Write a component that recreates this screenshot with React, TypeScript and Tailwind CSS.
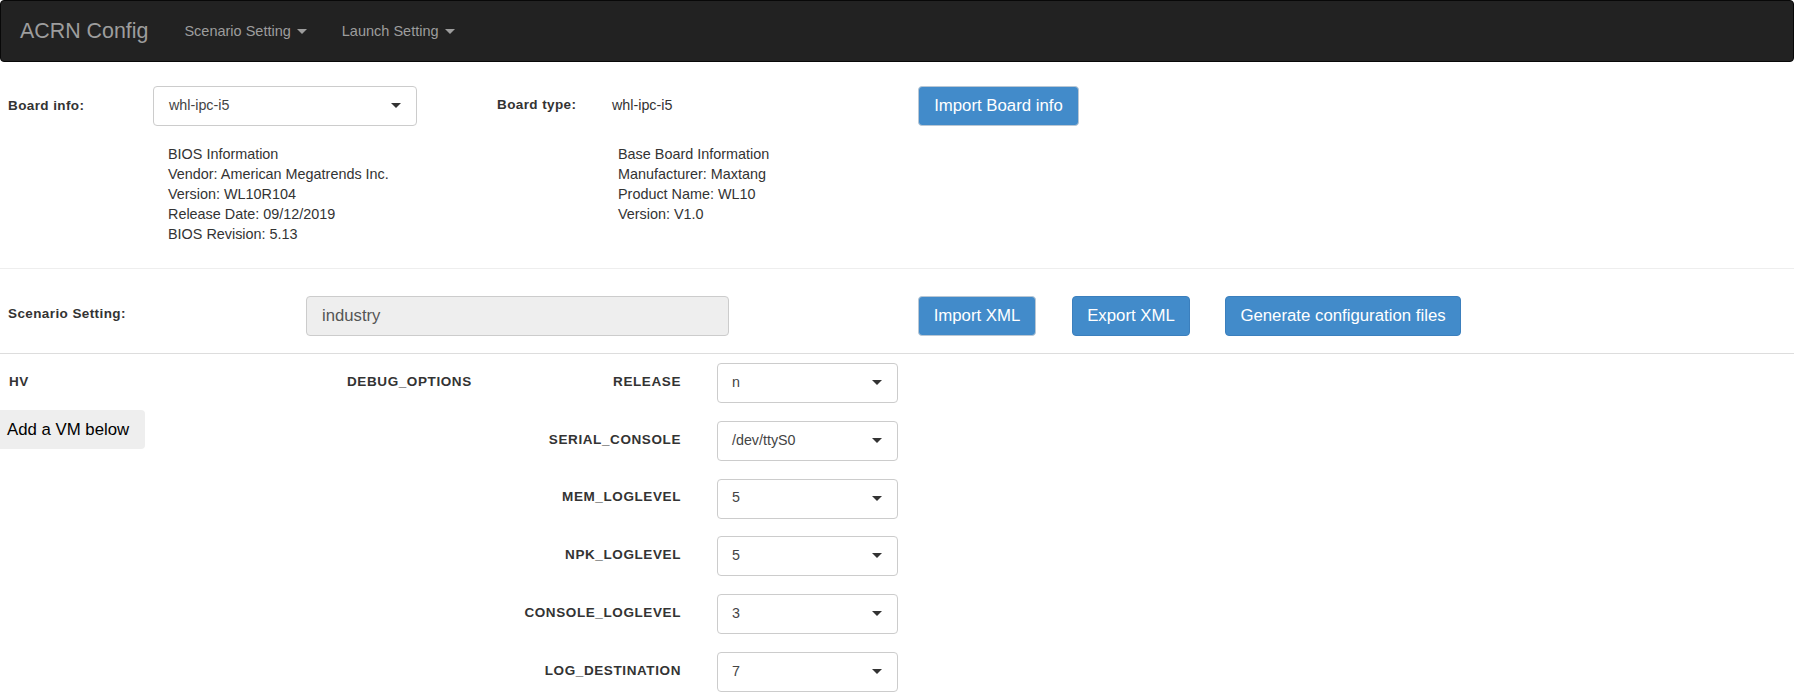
import React from 'react';

const fieldRows = [
  { name: 'RELEASE', value: 'n' },
  { name: 'SERIAL_CONSOLE', value: '/dev/ttyS0' },
  { name: 'MEM_LOGLEVEL', value: '5' },
  { name: 'NPK_LOGLEVEL', value: '5' },
  { name: 'CONSOLE_LOGLEVEL', value: '3' },
  { name: 'LOG_DESTINATION', value: '7' },
];

const biosInfo = ['BIOS Information', 'Vendor: American Megatrends Inc.', 'Version: WL10R104', 'Release Date: 09/12/2019', 'BIOS Revision: 5.13'];
const boardInfo = ['Base Board Information', 'Manufacturer: Maxtang', 'Product Name: WL10', 'Version: V1.0'];

function Caret({ className }: { className: string }) {
  return <span className={`inline-block h-0 w-0 border-x-[5px] border-t-[5px] border-x-transparent ${className}`} />;
}

function SelectBox({ value, className }: { value: string; className: string }) {
  return (
    <div className={`flex h-[40px] items-center justify-between rounded-[4px] border border-[#ccc] bg-white pb-[1px] pr-[15px] text-[14.3px] text-[#444] ${className}`}>
      <span>{value}</span>
      <Caret className="border-t-[#333]" />
    </div>
  );
}

function PrimaryButton({ label, className }: { label: string; className: string }) {
  return (
    <button type="button" className={`flex h-[40px] items-center justify-center rounded-[4px] border bg-[#428bca] text-[16.8px] text-white ${className}`}>
      {label}
    </button>
  );
}

function InfoBlock({ lines, className }: { lines: string[]; className: string }) {
  return (
    <div className={`text-[14.4px] leading-[20px] text-[#333] ${className}`}>
      {lines.map((line) => (
        <div key={line}>{line}</div>
      ))}
    </div>
  );
}

export default function App() {
  return (
    <div className="h-[700px] overflow-hidden bg-white font-['Liberation_Sans',Arial,sans-serif] text-[#333]">
      <nav className="flex h-[62px] items-center rounded-[4px] border border-[#080808] bg-[#222] pl-[19px]">
        <span className="text-[21.4px] text-[#9d9d9d]">ACRN Config</span>
        <span className="ml-[36px] flex items-center gap-[6px] pt-[1px] text-[14.5px] text-[#9d9d9d]">
          Scenario Setting <Caret className="border-t-[#9d9d9d]" />
        </span>
        <span className="ml-[35px] flex items-center gap-[6px] pt-[1px] text-[14.5px] text-[#9d9d9d]">
          Launch Setting <Caret className="border-t-[#9d9d9d]" />
        </span>
      </nav>

      <div className="flex pt-[24px]">
        <div className="w-[153px] pl-[8px] pt-[10px] text-[13.5px] font-bold tracking-[0.4px]">Board info:</div>
        <SelectBox value="whl-ipc-i5" className="w-[264px] pl-[15px]" />
        <div className="ml-[80px] w-[115px] pt-[9px] text-[13.5px] font-bold tracking-[0.4px]">Board type:</div>
        <div className="w-[306px] pt-[9px] text-[14.3px]">whl-ipc-i5</div>
        <PrimaryButton label="Import Board info" className="w-[161px] border-[#b9c7d4]" />
      </div>

      <div className="flex pt-[18px]">
        <InfoBlock lines={biosInfo} className="ml-[168px] w-[450px]" />
        <InfoBlock lines={boardInfo} className="" />
      </div>

      <hr className="mt-[24px] border-[#eee]" />

      <div className="flex items-center pt-[27px]">
        <div className="w-[306px] pb-[3px] pl-[8px] text-[13.5px] font-bold tracking-[0.4px]">Scenario Setting:</div>
        <div className="flex h-[40px] w-[423px] items-center rounded-[4px] border border-[#ccc] bg-[#eee] pb-[1px] pl-[15px] text-[16.7px] text-[#555]">industry</div>
        <PrimaryButton label="Import XML" className="ml-[189px] w-[118px] border-[#b9c7d4]" />
        <PrimaryButton label="Export XML" className="ml-[36px] w-[118px] border-[#3b7fbd]" />
        <PrimaryButton label="Generate configuration files" className="ml-[35px] w-[236px] border-[#3b7fbd]" />
      </div>

      <hr className="mt-[17px] border-[#ddd]" />

      <div className="flex pt-[9px]">
        <div className="w-[347px]">
          <div className="pl-[9px] pt-[9px] text-[13.5px] font-bold tracking-[0.4px]">HV</div>
          <button type="button" className="mt-[18px] flex h-[39px] w-[145px] items-center rounded-r-[4px] bg-[#eee] pl-[7px] text-[16.8px] text-black">
            Add a VM below
          </button>
        </div>
        <div className="w-[150px] pt-[9px] text-[13.5px] font-bold tracking-[0.6px]">DEBUG_OPTIONS</div>
        <div className="flex flex-col gap-[17.8px]">
          {fieldRows.map((row) => (
            <div key={row.name} className="flex items-center">
              <div className="w-[184px] pb-[2px] text-right text-[13.5px] font-bold tracking-[0.6px]">{row.name}</div>
              <SelectBox value={row.value} className="ml-[36px] w-[181px] pl-[14px]" />
            </div>
          ))}
        </div>
      </div>
    </div>
  );
}
